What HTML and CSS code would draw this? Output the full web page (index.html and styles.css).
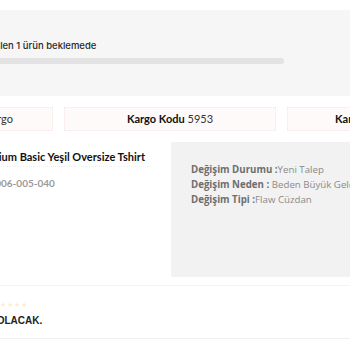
FILE: index.html
```html
<!DOCTYPE html>
<html lang="tr">
<head>
<meta charset="utf-8"/>
<meta content="width=device-width, initial-scale=1.0" name="viewport"/>
<title>Değişim Talebi</title>
<link rel="stylesheet" href="styles.css">
</head>
<body>
<div class="page">
<div class="status-band">
<p class="status-text">Talep edilen 1 ürün beklemede</p>
<div class="progress"></div>
</div>
<div class="cargo-row">
<div class="cargo-box"><b>Kargo Firması</b> Yurtiçi Kargo</div>
<div class="cargo-box"><b>Kargo Kodu</b> 5953</div>
<div class="cargo-box"><b>Kargo Takip No</b> 595312</div>
</div>
<div class="exchange">
<div class="product-card">
<a class="product-name">Premium Basic Yeşil Oversize Tshirt</a>
<span class="product-sku">SKU 006-005-040</span>
</div>
<div class="exchange-info">
<p><b>Değişim Durumu :</b>Yeni Talep</p>
<p><b>Değişim Neden :</b> Beden Büyük Geldi</p>
<p><b>Değişim Tipi :</b>Flaw Cüzdan</p>
</div>
</div>
<div class="note">
<span class="stars">★★★★</span>
<p class="note-text">YENİ ÜRÜNÜNÜZ KARGODA OLACAK.</p>
</div>
</div>
</body>
</html>
```

FILE: styles.css
```css
body {
    margin: 0;
    padding: 0;
    background-color: #fff;
    overflow: hidden;
    font-family: 'Open Sans', sans-serif;
    color: #222;
}
.page {
    width: 720px;
    margin-left: -175px;
    padding-top: 10px;
}
.status-band {
    background-color: #f6f6f6;
    height: 86px;
    padding-left: 134px;
    box-sizing: border-box;
    padding-top: 30px;
}
.status-text {
    font-family: 'Inter', sans-serif;
    font-size: 9.5px;
    font-weight: 500;
    color: #2a2a2a;
    margin: 0 0 7px 0;
}
.progress {
    width: 325px;
    height: 6px;
    border-radius: 3px;
    background-color: #e3e3e3;
}
.cargo-row {
    display: flex;
    gap: 11px;
    padding: 11px 16px 0 16px;
}
.cargo-box {
    width: 212px;
    flex-shrink: 0;
    height: 24px;
    box-sizing: border-box;
    border: 1px dotted #f3e6e6;
    background-color: #fffafa;
    font-family: 'Lato', sans-serif;
    font-size: 11px;
    line-height: 22px;
    text-align: center;
    color: #333;
}
.cargo-box b {
    color: #111;
}
.exchange {
    display: flex;
    margin-top: 11px;
    height: 135px;
}
.product-card {
    width: 347px;
    flex-shrink: 0;
    box-sizing: border-box;
    padding: 8px 0 0 148px;
    background-color: #fff;
    border-right: 1px solid #f3f3f3;
    font-family: 'Lato', sans-serif;
}
.product-name {
    display: block;
    font-size: 11px;
    font-weight: 700;
    color: #111;
    padding-bottom: 3px;
    border-bottom: 1px dotted #f6ecec;
    width: 175px;
}
.product-sku {
    display: block;
    margin-top: 10px;
    font-size: 10px;
    font-weight: 700;
    color: #9a9a9a;
}
.exchange-info {
    flex: 1;
    background-color: #f2f2f2;
    padding: 20px 0 0 19px;
}
.exchange-info p {
    margin: 0;
    font-size: 9.7px;
    line-height: 15px;
    color: #8a8a8a;
    white-space: nowrap;
}
.exchange-info b {
    color: #6e6e6e;
}
.note {
    margin-top: 8px;
    border-top: 1px solid #f4f4f4;
    border-bottom: 1px solid #f0f0f0;
    height: 54px;
    padding-left: 32px;
    box-sizing: border-box;
}
.stars {
    display: block;
    font-size: 7px;
    color: #f8efd4;
    padding-top: 15px;
    padding-left: 143px;
    line-height: 8px;
    letter-spacing: 1px;
}
.note-text {
    margin: 6px 0 0 0;
    font-family: 'Liberation Sans', sans-serif;
    font-size: 10px;
    font-weight: 700;
    color: #222;
}
```
